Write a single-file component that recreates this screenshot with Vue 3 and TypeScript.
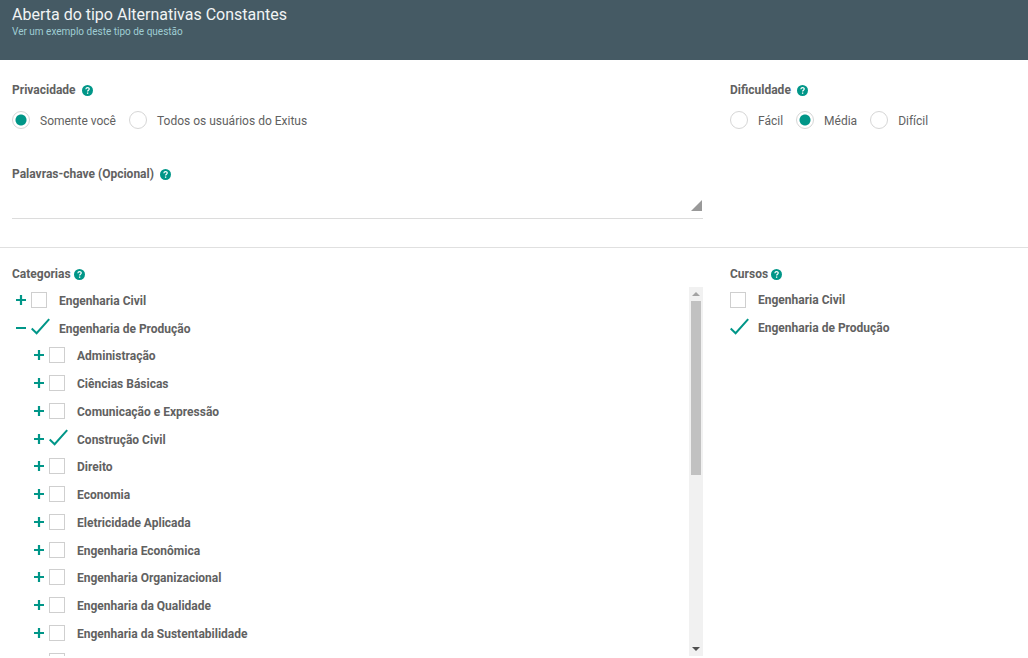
<script setup lang="ts">
import { h, ref } from 'vue'

interface Option {
  id: string
  label: string
}

interface Item {
  label: string
  checked: boolean
}

const privacyOptions: Option[] = [
  { id: 'self', label: 'Somente você' },
  { id: 'all', label: 'Todos os usuários do Exitus' },
]
const difficultyOptions: Option[] = [
  { id: 'easy', label: 'Fácil' },
  { id: 'medium', label: 'Média' },
  { id: 'hard', label: 'Difícil' },
]

const privacy = ref('self')
const difficulty = ref('medium')
const keywords = ref('')
const expanded = ref(true)

const roots = ref<Item[]>([
  { label: 'Engenharia Civil', checked: false },
  { label: 'Engenharia de Produção', checked: true },
])

const children = ref<Item[]>([
  { label: 'Administração', checked: false },
  { label: 'Ciências Básicas', checked: false },
  { label: 'Comunicação e Expressão', checked: false },
  { label: 'Construção Civil', checked: true },
  { label: 'Direito', checked: false },
  { label: 'Economia', checked: false },
  { label: 'Eletricidade Aplicada', checked: false },
  { label: 'Engenharia Econômica', checked: false },
  { label: 'Engenharia Organizacional', checked: false },
  { label: 'Engenharia da Qualidade', checked: false },
  { label: 'Engenharia da Sustentabilidade', checked: false },
  { label: '', checked: false },
])

const courses = ref<Item[]>([
  { label: 'Engenharia Civil', checked: false },
  { label: 'Engenharia de Produção', checked: true },
])

const list = ref<HTMLElement | null>(null)
const scroll = (delta: number) => list.value?.scrollBy({ top: delta })

const toggle = (index: number) => {
  if (index === 1) expanded.value = !expanded.value
}

const HelpIcon = () =>
  h('svg', { viewBox: '0 0 10 10', width: 11, height: 11, 'aria-hidden': 'true' }, [
    h('circle', { cx: 5, cy: 5, r: 5, fill: '#009688' }),
    h('path', {
      d: 'M3.5 3.9C3.6 2.9 4.2 2.4 5.1 2.4C6 2.4 6.6 2.9 6.6 3.6C6.6 4.7 5.1 4.7 5.1 5.9',
      fill: 'none',
      stroke: '#fff',
      'stroke-width': 1.1,
    }),
    h('rect', { x: 4.5, y: 6.8, width: 1.2, height: 1.2, fill: '#fff' }),
  ])

const CheckIcon = () =>
  h('svg', { class: 'tick', viewBox: '0 0 19 16', width: 19, height: 16, 'aria-hidden': 'true' }, [
    h('path', {
      d: 'M0.7 8.6L5.6 13.2L18.2 -0.8',
      fill: 'none',
      stroke: '#009688',
      'stroke-width': 2,
    }),
  ])

const PlusIcon = () =>
  h('svg', { viewBox: '0 0 10 10', width: 10, height: 10, 'aria-hidden': 'true' }, [
    h('path', { d: 'M0 5H10M5 0V10', fill: 'none', stroke: '#009688', 'stroke-width': 2.2 }),
  ])

const MinusIcon = () =>
  h('svg', { viewBox: '0 0 10 10', width: 10, height: 10, 'aria-hidden': 'true' }, [
    h('path', { d: 'M0 5H10', fill: 'none', stroke: '#009688', 'stroke-width': 2 }),
  ])
</script>

<template>
  <div class="page">
    <header class="header">
      <h1>Aberta do tipo Alternativas Constantes</h1>
      <a href="#exemplo">Ver um exemplo deste tipo de questão</a>
    </header>

    <section class="columns settings">
      <div>
        <fieldset>
          <legend class="title">Privacidade <HelpIcon /></legend>
          <div class="radios">
            <label v-for="o in privacyOptions" :key="o.id" class="radio">
              <input v-model="privacy" type="radio" name="privacy" :value="o.id" />
              <span class="text">{{ o.label }}</span>
            </label>
          </div>
        </fieldset>
        <label class="title keywords-title" for="keywords">Palavras-chave (Opcional) <HelpIcon /></label>
        <div class="keywords">
          <textarea id="keywords" v-model="keywords" rows="1"></textarea>
          <svg class="grip" viewBox="0 0 11 11" width="11" height="11" aria-hidden="true">
            <path d="M11 0V11H0Z" fill="#999" />
          </svg>
        </div>
      </div>
      <fieldset>
        <legend class="title">Dificuldade <HelpIcon /></legend>
        <div class="radios">
          <label v-for="o in difficultyOptions" :key="o.id" class="radio">
            <input v-model="difficulty" type="radio" name="difficulty" :value="o.id" />
            <span class="text">{{ o.label }}</span>
          </label>
        </div>
      </fieldset>
    </section>

    <section class="columns">
      <div>
        <h2 class="title tight">Categorias <HelpIcon /></h2>
        <div class="panel">
          <div ref="list" class="tree">
            <div v-for="(item, i) in roots" :key="item.label" class="row">
              <button type="button" class="toggle" :aria-label="'Expandir ' + item.label" @click="toggle(i)">
                <MinusIcon v-if="i === 1 && expanded" />
                <PlusIcon v-else />
              </button>
              <label class="check">
                <span class="box"><input v-model="item.checked" type="checkbox" /><CheckIcon v-if="item.checked" /></span>
                <span class="text">{{ item.label }}</span>
              </label>
            </div>
            <div v-if="expanded" class="children">
              <div v-for="(item, i) in children" :key="i" class="row">
                <button type="button" class="toggle" :aria-label="'Expandir ' + item.label"><PlusIcon /></button>
                <label class="check">
                  <span class="box"><input v-model="item.checked" type="checkbox" /><CheckIcon v-if="item.checked" /></span>
                  <span class="text">{{ item.label }}</span>
                </label>
              </div>
            </div>
          </div>
          <div class="scrollbar">
            <button type="button" aria-label="Rolar para cima" @click="scroll(-28)">
              <svg viewBox="0 0 8 4" width="8" height="4"><path d="M0 4L4 0L8 4Z" fill="#a3a3a3" /></svg>
            </button>
            <div class="track"><div class="thumb"></div></div>
            <button type="button" aria-label="Rolar para baixo" @click="scroll(28)">
              <svg viewBox="0 0 8 4" width="8" height="4"><path d="M0 0L4 4L8 0Z" fill="#505050" /></svg>
            </button>
          </div>
        </div>
      </div>
      <div>
        <h2 class="title tight">Cursos <HelpIcon /></h2>
        <div class="courses">
          <label v-for="item in courses" :key="item.label" class="check row">
            <span class="box"><input v-model="item.checked" type="checkbox" /><CheckIcon v-if="item.checked" /></span>
            <span>{{ item.label }}</span>
          </label>
        </div>
      </div>
    </section>
  </div>
</template>

<style>
body {
  margin: 0;
  background: #fff;
}
</style>

<style scoped>
.page {
  font: 400 12px/20px Roboto, sans-serif;
  color: #616161;
}
.header {
  box-sizing: border-box;
  height: 60px;
  padding: 4px 12px 0;
  background: #455a64;
}
h1 {
  margin: 0;
  font-size: 16px;
  line-height: 22px;
  font-weight: 400;
  color: #f1f4f5;
}
.header a {
  display: block;
  font-size: 10px;
  line-height: 12px;
  color: #9fcdd3;
  text-decoration: none;
}
.columns {
  display: grid;
  grid-template-columns: minmax(0, 1fr) 286px;
  gap: 27px;
  padding: 16px 12px 0;
}
.settings {
  padding: 20px 12px 28px;
  border-bottom: 1px solid #e0e0e0;
}
fieldset {
  min-width: 0;
  margin: 0;
  padding: 0;
  border: 0;
}
.title {
  display: flex;
  align-items: center;
  gap: 6px;
  margin: 0;
  padding: 0;
  font-size: 12px;
  line-height: 20px;
  font-weight: 700;
}
.tight {
  gap: 3px;
}
.radios {
  display: flex;
  gap: 13px;
  padding-top: 9px;
}
.radio {
  display: flex;
  align-items: center;
  gap: 10px;
}
input {
  appearance: none;
  box-sizing: border-box;
  margin: 0;
  background: #fff;
}
.radio input {
  width: 18px;
  height: 18px;
  border: 1px solid #d6d6d6;
  border-radius: 50%;
}
.radio input:checked {
  background: radial-gradient(circle, #009688 5px, #fff 6px);
}
.keywords-title {
  margin-top: 33px;
}
.keywords {
  position: relative;
  height: 34px;
  border-bottom: 1px solid #dcdcdc;
}
textarea {
  display: block;
  box-sizing: border-box;
  width: 100%;
  height: 28px;
  padding: 4px 0;
  border: 0;
  outline: 0;
  resize: none;
  font: inherit;
  color: inherit;
  background: transparent;
}
.grip {
  position: absolute;
  right: 1px;
  bottom: 7px;
}
.panel {
  display: flex;
  height: 369px;
  margin-top: 3px;
}
.tree {
  flex: 1;
  overflow: hidden;
}
.row {
  display: flex;
  align-items: center;
  height: 28px;
}
.tree .row {
  box-sizing: border-box;
  padding-bottom: 3px;
}
.toggle {
  display: flex;
  width: 19px;
  padding: 0 0 0 4px;
  border: 0;
  background: none;
}
.check {
  display: flex;
  align-items: center;
  font-weight: 700;
}
.box {
  display: grid;
  width: 28px;
}
.box > * {
  grid-area: 1 / 1;
}
.tick {
  overflow: visible;
}
.box input {
  width: 16px;
  height: 16px;
  border: 1px solid #cfcfcf;
}
.box input:checked {
  border-color: transparent;
}
.text {
  padding-top: 2px;
}
.children {
  display: grid;
  grid-auto-rows: 1fr;
  height: 333px;
  padding-left: 18px;
}
.children .row {
  height: auto;
}
.scrollbar {
  display: flex;
  flex-direction: column;
  width: 14px;
  background: #f1f1f1;
}
.scrollbar button {
  display: flex;
  align-items: center;
  justify-content: center;
  height: 14px;
  padding: 0;
  border: 0;
  background: none;
}
.track {
  flex: 1;
  padding: 0 2px;
}
.thumb {
  height: 51%;
  background: #c1c1c1;
}
.courses {
  margin-top: 2px;
}
</style>
